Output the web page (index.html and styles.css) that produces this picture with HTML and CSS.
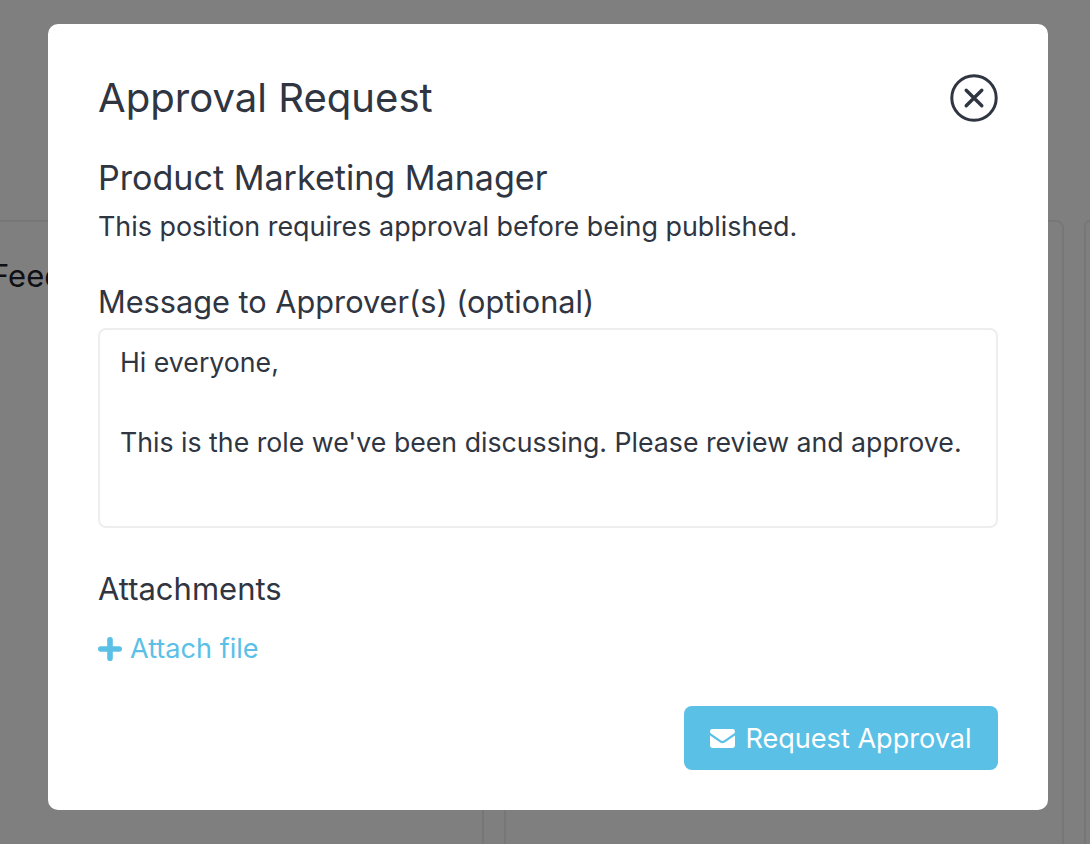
FILE: index.html
```html
<!DOCTYPE html>
<html lang="en">
<head>
<meta charset="utf-8">
<title>Approval Request</title>
<link rel="stylesheet" href="styles.css">
</head>
<body>
<main class="page">
  <section class="card card-first"><h2 class="card-title">Feedback</h2></section>
  <section class="card card-second"></section>
  <section class="card card-third"></section>
</main>
<div class="overlay">
  <div class="modal">
    <header class="modal-head">
      <h1 class="modal-title">Approval Request</h1>
      <button class="close" aria-label="Close">
        <svg width="48" height="48" viewBox="0 0 48 48" fill="none" stroke="#2f3541" stroke-width="3" stroke-linecap="round">
          <circle cx="24" cy="24" r="22.2"/>
          <path d="M16.2 16.2 31.8 31.8M31.8 16.2 16.2 31.8" stroke-width="3.4"/>
        </svg>
      </button>
    </header>
    <h2 class="position">Product Marketing Manager</h2>
    <p class="note">This position requires approval before being published.</p>
    <label class="label label-message" for="msg">Message to Approver(s) (optional)</label>
    <div class="textarea" id="msg">
      <p class="line">Hi everyone,</p>
      <p class="line">&nbsp;</p>
      <p class="line">This is the role we've been discussing. Please review and approve.</p>
    </div>
    <h3 class="label attachments">Attachments</h3>
    <a class="attach">
      <svg width="24" height="24" viewBox="0 0 24 24" fill="none" stroke="#5bc0e6" stroke-width="5.6" stroke-linecap="round">
        <path d="M12 2.8V21.2M2.8 12H21.2"/>
      </svg>
      <span>Attach file</span>
    </a>
    <footer class="actions">
      <button class="submit">
        <svg width="25" height="19" viewBox="0 0 25 19" fill="#fff">
          <path d="M2.4 0H22.6A2.4 2.4 0 0 1 25 2.4C25 3.4 24.4 4.2 23.6 4.8L13.9 11.6A2.5 2.5 0 0 1 11.1 11.6L1.4 4.8C.6 4.2 0 3.4 0 2.4A2.4 2.4 0 0 1 2.4 0Z"/>
          <path d="M0 6.4 10.2 13.5A4 4 0 0 0 14.8 13.5L25 6.4V16.6A2.4 2.4 0 0 1 22.6 19H2.4A2.4 2.4 0 0 1 0 16.6Z"/>
        </svg>
        <span class="submit-text">Request Approval</span>
      </button>
    </footer>
  </div>
</div>
</body>
</html>
```

FILE: styles.css
```css
* { box-sizing: border-box; }
html, body { margin: 0; height: 100%; overflow: hidden; }
body { background: #fff; font-family: Inter, "Liberation Sans", sans-serif; color: #2f3541; }

.page {
  display: flex;
  gap: 20px;
  height: 844px;
  padding-top: 220px;
  overflow: hidden;
}
.card { border: 2px solid #eeeeee; border-bottom: 0; border-radius: 8px 8px 0 0; flex: none; }
.card-first { width: 484px; border-left: 0; border-top-left-radius: 0; padding-top: 36px; }
.card-second { width: 560px; }
.card-third { flex: 1; border-right: 0; border-top-right-radius: 0; }
.card-title { margin: 0 0 0 -9px; font-size: 31px; font-weight: 400; line-height: 36px; color: #1d2129; }

.overlay {
  position: fixed;
  inset: 0;
  background: rgba(0, 0, 0, .5);
  padding: 24px 42px 0 48px;
}
.modal {
  background: #fff;
  border-radius: 10px;
  height: 786px;
  padding: 50px 50px 40px;
  display: flex;
  flex-direction: column;
}
.modal-head { display: flex; justify-content: space-between; align-items: center; height: 48px; }
.modal-title { margin: 0; font-size: 40.1px; line-height: 46px; font-weight: 400; }
.close { border: 0; background: none; padding: 0; width: 48px; height: 48px; display: block; }
.close svg { display: block; }

.position { margin: 36px 0 0; font-size: 34.1px; line-height: 40px; font-weight: 400; }
.note { margin: 8px 0 0; font-size: 26.9px; line-height: 40px; }
.label { display: block; margin: 36px 0 0; font-size: 30.7px; line-height: 40px; font-weight: 400; }
.textarea {
  margin-top: 6px;
  height: 200px;
  border: 2px solid #eeeeee;
  border-radius: 8px;
  padding: 12px 20px;
}
.line { margin: 0; font-size: 26.7px; line-height: 40px; }
.attachments { margin-top: 41px; font-size: 31px; }
.attach { display: flex; align-items: center; gap: 8px; margin-top: 20px; font-size: 27.1px; line-height: 40px; color: #5bc0e6; }
.actions { display: flex; justify-content: flex-end; margin-top: auto; }
.submit {
  display: flex;
  align-items: center;
  gap: 10px;
  width: 314px;
  height: 64px;
  justify-content: center;
  background: #5bc0e6;
  color: #fff;
  border: 0;
  border-radius: 8px;
  font: 400 27.1px/40px Inter, "Liberation Sans", sans-serif;
}
.submit-text { padding-top: 2px; }
```
